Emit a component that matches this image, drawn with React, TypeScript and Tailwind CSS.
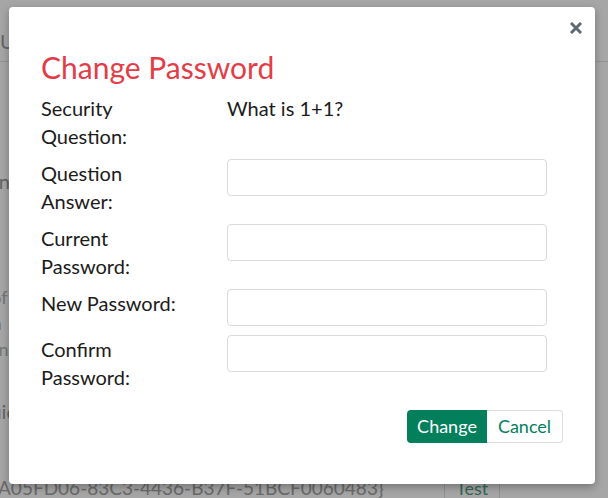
import type { ReactNode } from "react";

function CloseIcon() {
	return (
		<svg viewBox="0 0 12 12" className="h-3 w-3" aria-hidden="true">
			<path
				d="M2 2 L10 10 M10 2 L2 10"
				stroke="#5d6b76"
				strokeWidth="3"
				strokeLinecap="square"
			/>
		</svg>
	);
}

function Row({ label, children }: { label: string; children: ReactNode }) {
	return (
		<div className="mb-[9px] grid grid-cols-[186px_320px]">
			<label className="w-[145px] text-[20px] leading-[28px] text-[#1b1b1b]">{label}</label>
			<div>{children}</div>
		</div>
	);
}

function TextField({ type = "password" }: { type?: string }) {
	return (
		<input
			type={type}
			className="h-[37px] w-[320px] rounded-[4px] border border-[#dadada] bg-white px-3 text-[16px] outline-none"
		/>
	);
}

export default function App() {
	return (
		<div className="relative h-[498px] w-[608px] overflow-hidden bg-white font-['Lato','Open_Sans',sans-serif]">
			{/* page behind the dialog */}
			<div className="flex flex-col text-[#9a9a9a]">
				<div className="border-b border-[#e3e3e3] pt-[30px] pb-[6px]">
					<span className="text-[20px] leading-[22px]">Users</span>
				</div>
				<div className="mt-[108px] -ml-[42px] text-[20px] leading-[22px]">Username</div>
				<div className="mt-[92px] flex flex-col -ml-[60px] text-[18px] leading-[26px] text-[#b5b5b5]">
					<span>Name of the</span>
					<span>Contain</span>
					<span>Partition</span>
				</div>
				<div className="mt-[38px] -ml-[24px] text-[20px] leading-[22px]">Guid</div>
				<div className="mt-[50px] flex items-center">
					<span className="-ml-[2px] w-[446px] text-[19px] leading-[24px] text-[#a3a3a3]">
						A05FD06-83C3-4436-B37F-51BCF0060483&#125;
					</span>
					<span className="rounded-[4px] border border-[#dedede] px-[11px] text-[18px] leading-[30px] text-[#4f9f86]">
						Test
					</span>
				</div>
			</div>

			<div className="absolute inset-0 bg-black/35" />

			{/* dialog */}
			<div className="absolute left-[9px] top-[7px] flex h-[477px] w-[586px] flex-col rounded-[4px] bg-white pl-[32px] pr-[32px] shadow-[0_3px_9px_rgba(0,0,0,0.3)]">
				<div className="flex justify-end pt-[15px] -mr-[19px]">
					<button type="button" className="flex h-[12px] w-[12px] items-center justify-center">
						<CloseIcon />
					</button>
				</div>
				<h3 className="mt-[17px] text-[30px] leading-[33px] font-normal text-[#e33d47]">
					Change Password
				</h3>
				<div className="mt-[10px] flex flex-col">
					<Row label="Security Question:">
						<span className="text-[20px] leading-[28px] text-[#1b1b1b]">What is 1+1?</span>
					</Row>
					<Row label="Question Answer:">
						<TextField type="text" />
					</Row>
					<Row label="Current Password:">
						<TextField />
					</Row>
					<Row label="New Password:">
						<TextField />
					</Row>
					<Row label="Confirm Password:">
						<TextField />
					</Row>
				</div>
				<div className="mt-[10px] flex justify-end">
					<button
						type="button"
						className="h-[33px] w-[80px] rounded-l-[4px] bg-[#03805b] text-[18px] text-white"
					>
						Change
					</button>
					<button
						type="button"
						className="h-[33px] w-[76px] rounded-r-[4px] border border-l-0 border-[#dcdcdc] bg-white text-[18px] text-[#03805b]"
					>
						Cancel
					</button>
				</div>
			</div>
		</div>
	);
}
